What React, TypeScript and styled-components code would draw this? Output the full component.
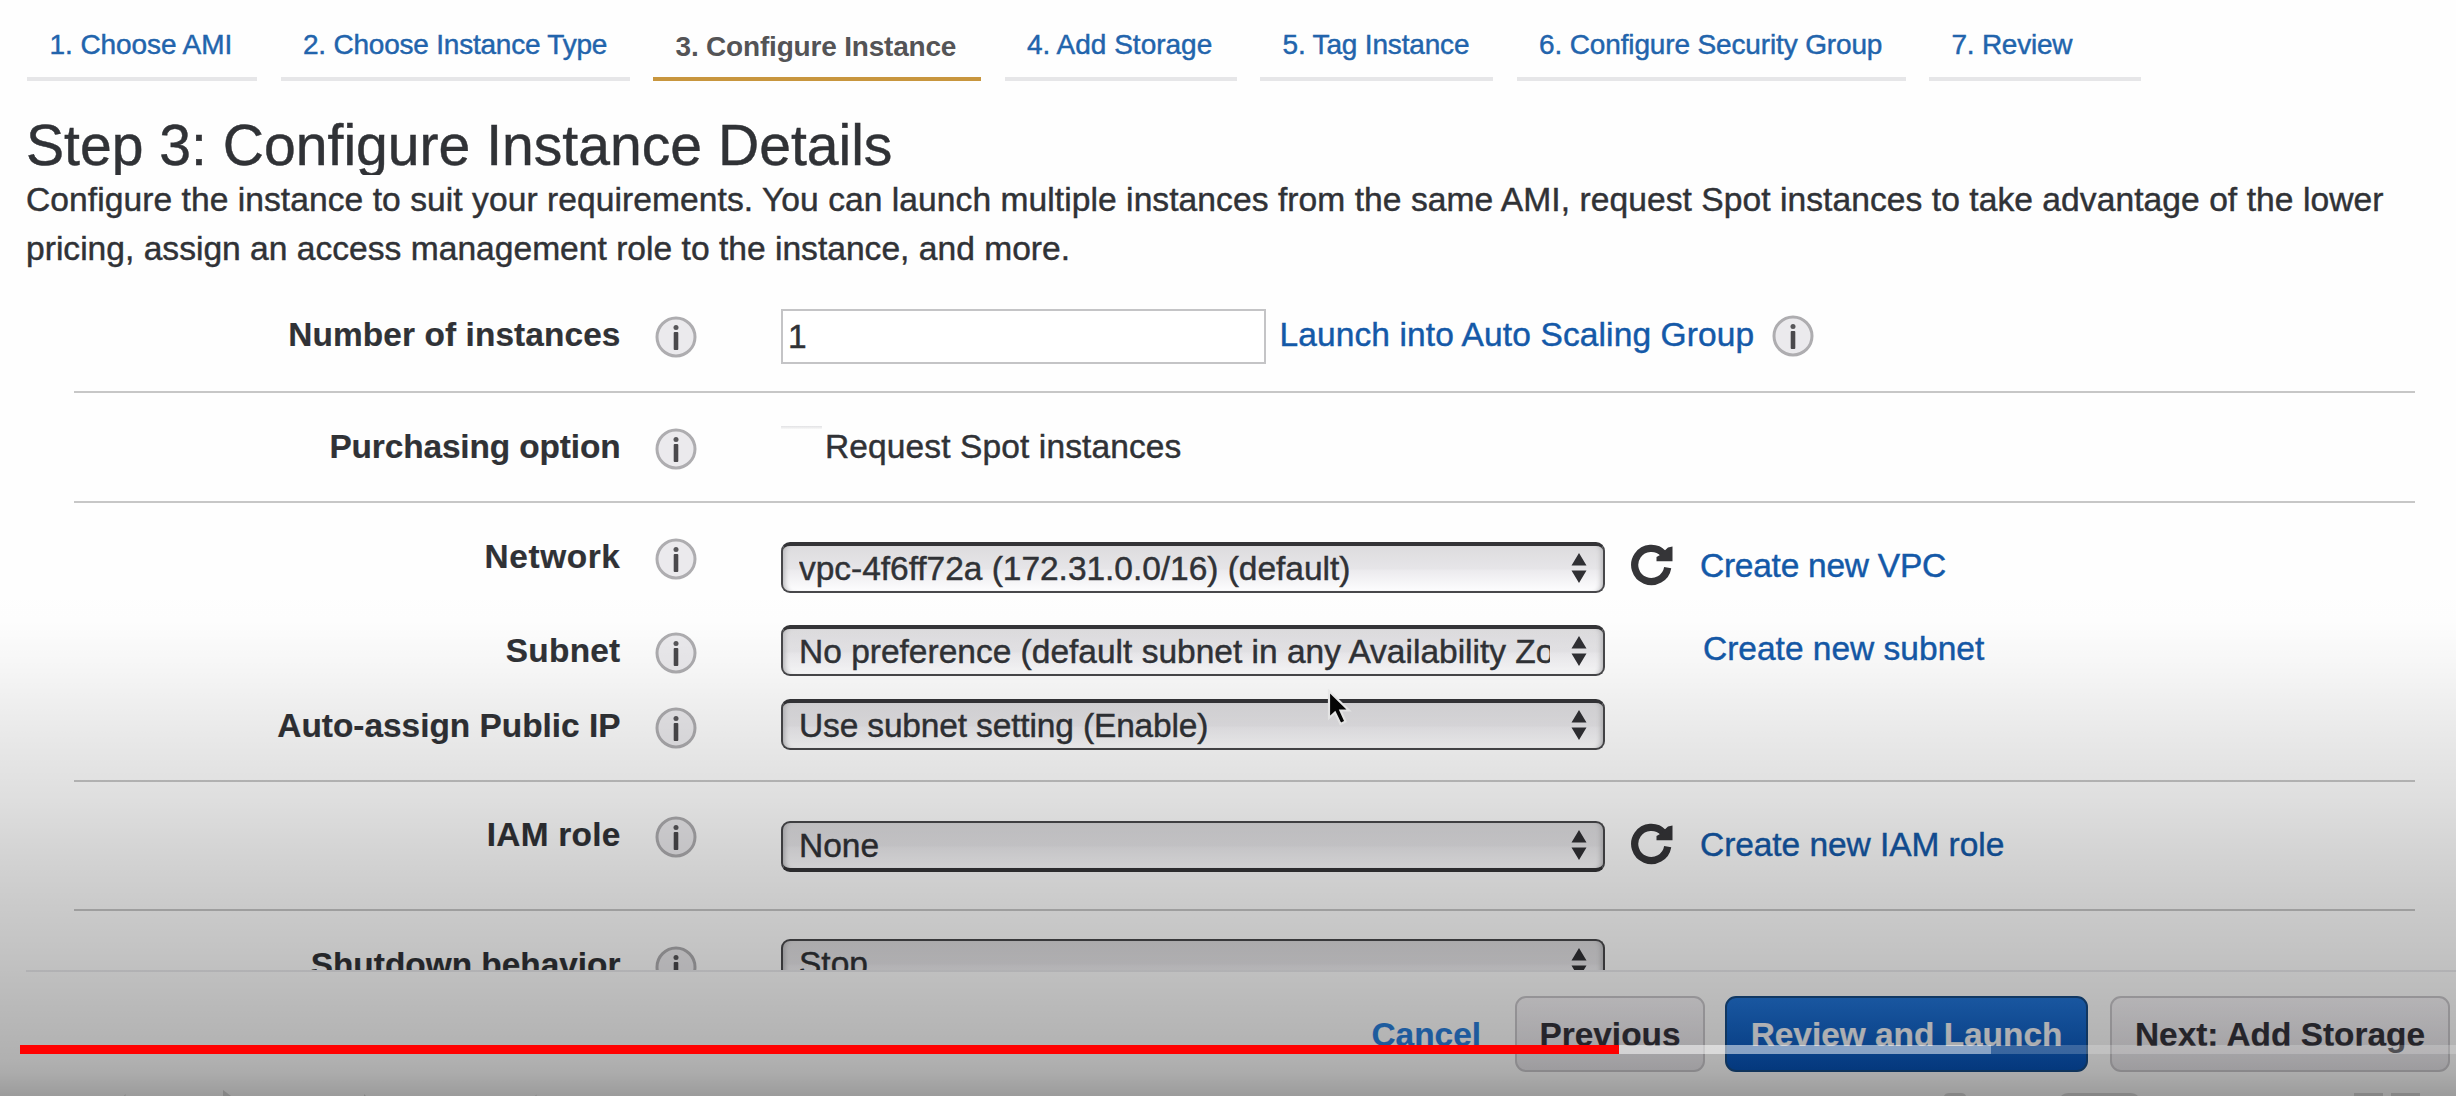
import React from "react";
import styled, { createGlobalStyle } from "styled-components";

const GlobalStyle = createGlobalStyle`
  html, body { margin: 0; padding: 0; background: #fefefe; }
  *, *::before, *::after { box-sizing: border-box; }
`;

const Page = styled.div`
  position: relative;
  display: flex;
  flex-direction: column;
  width: 2456px;
  height: 1096px;
  overflow: hidden;
  background: #fefefe;
  color: #303236;
  font-family: "Liberation Sans", Arial, sans-serif;
  font-size: 33.5px;
  line-height: 40px;
  -webkit-text-stroke: 0.45px currentColor;
`;

const Tabs = styled.nav`
  display: flex;
  flex: none;
  gap: 23.5px;
  height: 81px;
  padding-left: 27px;
`;

const Tab = styled.a<{ $width: number; $active?: boolean; $spacing: number }>`
  width: ${(p) => p.$width}px;
  padding: ${(p) => (p.$active ? 26.5 : 24.5)}px 0 0 22.5px;
  border-bottom: 4px solid ${(p) => (p.$active ? "#c8963e" : "#e6e6e8")};
  color: ${(p) => (p.$active ? "#545456" : "#2264ac")};
  font-size: 28px;
  font-weight: ${(p) => (p.$active ? 700 : 400)};
  letter-spacing: ${(p) => p.$spacing}px;
  white-space: nowrap;
  -webkit-text-stroke-width: ${(p) => (p.$active ? 0 : 0.45)}px;
`;

const Title = styled.h1`
  flex: none;
  height: 61px;
  margin: 33px 0 0 26px;
  overflow: hidden;
  font-size: 57.1px;
  font-weight: 400;
  line-height: 62px;
  white-space: nowrap;
`;

const Intro = styled.p`
  flex: none;
  height: 117px;
  margin: 0 0 0 26px;
  font-size: 33.6px;
  line-height: 49px;
  white-space: nowrap;
`;

const IntroLine = styled.span<{ $spacing: number }>`
  display: block;
  letter-spacing: ${(p) => p.$spacing}px;
`;

const Form = styled.form`
  flex: none;
  height: 678px;
  margin-left: 74px;
  width: 2341px;
  overflow: hidden;
`;

const Row = styled.div<{ $height: number; $line?: boolean }>`
  display: flex;
  align-items: flex-start;
  height: ${(p) => p.$height}px;
  border-bottom: ${(p) => (p.$line ? "2px solid #c7c7c7" : "none")};
`;

const Label = styled.label<{ $top: number; $spacing: number }>`
  width: 546.5px;
  margin-top: ${(p) => p.$top}px;
  font-size: 33.4px;
  font-weight: 700;
  letter-spacing: ${(p) => p.$spacing}px;
  text-align: right;
  white-space: nowrap;
  -webkit-text-stroke-width: 0.2px;
`;

const InfoSlot = styled.span<{ $top: number }>`
  display: flex;
  margin: ${(p) => p.$top}px 84px 0 34.5px;
`;

const Controls = styled.div<{ $top: number }>`
  display: flex;
  align-items: center;
  margin-top: ${(p) => p.$top}px;
  white-space: nowrap;
`;

const NumberBox = styled.div`
  width: 485px;
  height: 55px;
  padding: 6px 0 0 5px;
  border: 2px solid #c4c4c6;
  background: #fff;
`;

const LaunchLink = styled.a`
  margin: -2px 18px 0 13.5px;
  color: #1459a8;
  letter-spacing: 0.12px;
`;

const CheckboxEdge = styled.span`
  align-self: flex-start;
  width: 41px;
  height: 3px;
  margin-right: 3px;
  background: linear-gradient(#e2e2e4, #f8f8f8);
`;

const CheckboxText = styled.span`
  padding-top: 1px;
  letter-spacing: 0.12px;
`;

const SelectBox = styled.div<{ $heavy: "top" | "bottom" }>`
  display: flex;
  align-items: center;
  width: 824px;
  height: 51px;
  padding: 0 16px 0 16px;
  border: 2px solid #48484b;
  border-top: ${(p) => (p.$heavy === "top" ? "4px solid #343437" : "2px solid #48484b")};
  border-bottom: ${(p) => (p.$heavy === "bottom" ? "4px solid #343437" : "2px solid #48484b")};
  border-radius: 9px;
  background: linear-gradient(#dddcde 0%, #e6e5e8 50%, #ecebee 55%, #fdfdfe 100%);
  box-shadow: inset 6px 0 5px -4px #b9b9bc, inset -6px 0 5px -4px #b9b9bc;
`;

const SelectText = styled.span<{ $shift: number; $spacing: number }>`
  width: 751px;
  overflow: hidden;
  padding-top: ${(p) => p.$shift}px;
  letter-spacing: ${(p) => p.$spacing}px;
`;

const ArrowSlot = styled.span`
  display: flex;
  margin: -1px 0 0 auto;
`;

const RefreshSlot = styled.span`
  display: flex;
  width: 42px;
  margin: -5px 0 0 26px;
`;

const CreateLink = styled.a<{ $left: number; $spacing: number }>`
  margin: -3px 0 0 ${(p) => p.$left}px;
  color: #1459a8;
  letter-spacing: ${(p) => p.$spacing}px;
`;

const Footer = styled.footer`
  display: flex;
  flex: none;
  justify-content: flex-end;
  align-items: flex-start;
  height: 126px;
  margin-left: 26px;
  padding: 24px 6px 0 0;
  border-top: 2px solid #ebebee;
  font-size: 33.4px;
  font-weight: 700;
  white-space: nowrap;
  -webkit-text-stroke-width: 0.2px;
`;

const Cancel = styled.a`
  margin: 19px 34px 0 0;
  color: #2a80dd;
`;

const FooterButton = styled.div<{ $width: number; $gap: number; $primary?: boolean }>`
  display: flex;
  align-items: center;
  justify-content: center;
  width: ${(p) => p.$width}px;
  height: 76px;
  padding-top: 2px;
  margin-left: ${(p) => p.$gap}px;
  border: 2px solid ${(p) => (p.$primary ? "#174c86" : "#cac8cc")};
  border-radius: 11px;
  background: ${(p) => (p.$primary ? "linear-gradient(#2276da, #0653b8)" : "linear-gradient(#f6f4f7, #e7e5e9)")};
  color: ${(p) => (p.$primary ? "#f4f6fa" : "#34333b")};
`;

const Shade = styled.div`
  position: absolute;
  inset: 580px 0 0 0;
  pointer-events: none;
  background: linear-gradient(
    rgba(0, 0, 0, 0) 0px,
    rgba(0, 0, 0, 0.004) 40px,
    rgba(0, 0, 0, 0.027) 80px,
    rgba(0, 0, 0, 0.057) 120px,
    rgba(0, 0, 0, 0.093) 170px,
    rgba(0, 0, 0, 0.127) 220px,
    rgba(0, 0, 0, 0.165) 270px,
    rgba(0, 0, 0, 0.2) 320px,
    rgba(0, 0, 0, 0.232) 370px,
    rgba(0, 0, 0, 0.265) 420px,
    rgba(0, 0, 0, 0.305) 480px,
    rgba(0, 0, 0, 0.325) 493px,
    rgba(0, 0, 0, 0.39) 516px
  );
`;

const Track = styled.div`
  position: absolute;
  left: 20px;
  right: 0;
  top: 1045px;
  display: flex;
  height: 9px;
`;

const Played = styled.div`
  width: 1599px;
  background: #ff0000;
`;

const Loaded = styled.div`
  width: 372px;
  background: rgba(255, 255, 255, 0.52);
`;

const Unloaded = styled.div`
  flex: 1;
  background: rgba(255, 255, 255, 0.2);
`;

const PlayerEdge = styled.svg`
  position: absolute;
  left: 0;
  bottom: 0;
`;

const Cursor = styled.svg`
  position: absolute;
  left: 1325px;
  top: 687px;
`;

const InfoIcon = () => (
  <svg width="42" height="42" viewBox="0 0 42 42">
    <circle cx="21" cy="21" r="19" fill="#ebeaed" stroke="#aeadb0" strokeWidth="3" />
    <circle cx="21" cy="11.5" r="2.5" fill="#58575a" />
    <rect x="18.7" y="16" width="4.6" height="18" rx="1" fill="#4a494c" />
  </svg>
);

const Arrows = () => (
  <svg width="16" height="32" viewBox="0 0 16 32">
    <path d="M8 1 L15.5 13.500 H0.5 Z M8 31 L0.5 18.500 H15.500 Z" fill="#303034" />
  </svg>
);

const RefreshIcon = () => (
  <svg width="42" height="42" viewBox="0 0 42 42">
    <path d="M32.5 9.700 A16.6 16.6 0 1 0 36.700 23.600" fill="none" stroke="#353538" strokeWidth="7.2" />
    <path d="M41.5 2.500 V17.300 H25.500 V13 L29 11 L37 3.500 Z" fill="#353538" />
  </svg>
);

type FieldProps = {
  label: string;
  height: number;
  top: number;
  controlTop: number;
  spacing?: number;
  line?: boolean;
  children: React.ReactNode;
};

const Field = ({ label, height, top, controlTop, spacing = 0, line, children }: FieldProps) => (
  <Row $height={height} $line={line}>
    <Label $top={top + 1} $spacing={spacing}>
      {label}
    </Label>
    <InfoSlot $top={top + 2}>
      <InfoIcon />
    </InfoSlot>
    <Controls $top={controlTop}>{children}</Controls>
  </Row>
);

type SelectProps = { value: string; heavy?: "top" | "bottom"; spacing?: number };

const Select = ({ value, heavy = "top", spacing = 0 }: SelectProps) => (
  <SelectBox $heavy={heavy}>
    <SelectText $shift={heavy === "top" ? 0 : 1} $spacing={spacing}>
      {value}
    </SelectText>
    <ArrowSlot>
      <Arrows />
    </ArrowSlot>
  </SelectBox>
);

const tabs = [
  { text: "1. Choose AMI", width: 230, spacing: -0.08 },
  { text: "2. Choose Instance Type", width: 349, spacing: -0.22 },
  { text: "3. Configure Instance", width: 328, spacing: -0.19, active: true },
  { text: "4. Add Storage", width: 232, spacing: 0 },
  { text: "5. Tag Instance", width: 233, spacing: -0.17 },
  { text: "6. Configure Security Group", width: 389, spacing: -0.14 },
  { text: "7. Review", width: 212, spacing: -0.25 },
];

export default function App() {
  return (
    <>
      <GlobalStyle />
      <Page>
        <Tabs>
          {tabs.map((t) => (
            <Tab key={t.text} $width={t.width} $active={t.active} $spacing={t.spacing}>
              {t.text}
            </Tab>
          ))}
        </Tabs>
        <Title>Step 3: Configure Instance Details</Title>
        <Intro>
          <IntroLine $spacing={0.06}>
            Configure the instance to suit your requirements. You can launch multiple instances from the same AMI,
            request Spot instances to take advantage of the lower
          </IntroLine>
          <IntroLine $spacing={0.01}>
            pricing, assign an access management role to the instance, and more.
          </IntroLine>
        </Intro>
        <Form>
          <Field label="Number of instances" height={101} top={22} controlTop={16.5} spacing={0.1} line>
            <NumberBox>1</NumberBox>
            <LaunchLink>Launch into Auto Scaling Group</LaunchLink>
            <InfoIcon />
          </Field>
          <Field label="Purchasing option" height={110} top={33} controlTop={33} spacing={-0.12} line>
            <CheckboxEdge />
            <CheckboxText>Request Spot instances</CheckboxText>
          </Field>
          <Field label="Network" height={117} top={33} controlTop={39} spacing={0.6}>
            <Select value="vpc-4f6ff72a (172.31.0.0/16) (default)" spacing={-0.03} />
            <RefreshSlot>
              <RefreshIcon />
            </RefreshSlot>
            <CreateLink $left={27} $spacing={-0.25}>
              Create new VPC
            </CreateLink>
          </Field>
          <Field label="Subnet" height={75} top={9.5} controlTop={5} spacing={0.25}>
            <Select value="No preference (default subnet in any Availability Zone)" />
            <CreateLink $left={98} $spacing={0}>
              Create new subnet
            </CreateLink>
          </Field>
          <Field label="Auto-assign Public IP" height={87} top={10} controlTop={4} line>
            <Select value="Use subnet setting (Enable)" spacing={-0.15} />
          </Field>
          <Field label="IAM role" height={129} top={32} controlTop={38.5} spacing={0.25} line>
            <Select value="None" heavy="bottom" />
            <RefreshSlot>
              <RefreshIcon />
            </RefreshSlot>
            <CreateLink $left={27} $spacing={-0.06}>
              Create new IAM role
            </CreateLink>
          </Field>
          <Field label="Shutdown behavior" height={80} top={33} controlTop={27.5}>
            <Select value="Stop" heavy="bottom" />
          </Field>
        </Form>
        <Footer>
          <Cancel>Cancel</Cancel>
          <FooterButton $width={190} $gap={0}>
            Previous
          </FooterButton>
          <FooterButton $width={363} $gap={20} $primary>
            Review and Launch
          </FooterButton>
          <FooterButton $width={340} $gap={22}>
            Next: Add Storage
          </FooterButton>
        </Footer>
        <Cursor width="32" height="42" viewBox="0 0 32 42">
          <path
            d="M4 4 V31 L10 25.500 L15.500 37 L20.500 34.500 L15.500 23.500 H24 Z"
            fill="#050505"
            stroke="#f4f4f4"
            strokeWidth="2.2"
          />
        </Cursor>
        <Shade />
        <PlayerEdge width="2456" height="8" viewBox="0 0 2456 8">
          <path d="M223 2 L231 8 H223 Z" fill="#868686" />
          <path
            d="M1944 8 Q1945 5 1950 5 H1961 Q1965 5 1966 8 Z M2061 8 Q2064 5 2069 5 H2130 Q2135 5 2138 8 Z M2354 5 H2383 V8 H2354 Z M2391 5 H2420 V8 H2391 Z"
            fill="#868686"
          />
          <path d="M124 8 L125.500 6 V8 Z M364 6 L366 8 H364 Z M535 8 L536.500 6.500 V8 Z" fill="#868686" />
        </PlayerEdge>
        <Track>
          <Played />
          <Loaded />
          <Unloaded />
        </Track>
      </Page>
    </>
  );
}
